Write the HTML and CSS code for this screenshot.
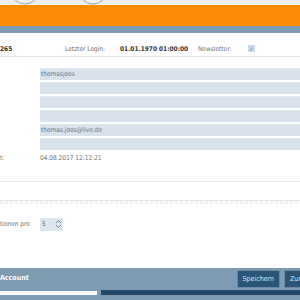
FILE: index.html
```html
<!DOCTYPE html>
<html lang="de">
<head>
	<meta charset="UTF-8">
	<title>Konto</title>
	<link rel="stylesheet" href="styles.css">
</head>
<body>
	<div class="top">
		<div class="icon"><svg width="30" height="30" viewBox="0 0 30 30"><circle cx="15" cy="15" r="14" fill="#f4f5f6" stroke="#9aa5b0" stroke-width="1"/><path d="M8 21h14M9 22l2-2h8l2 2" fill="none" stroke="#5c7a96" stroke-width="1"/></svg></div>
		<div class="icon icon2"><svg width="30" height="30" viewBox="0 0 30 30"><circle cx="15" cy="15" r="14" fill="#f4f5f6" stroke="#9aa5b0" stroke-width="1"/><path d="M6 21h18l-2 2H8z" fill="none" stroke="#5c7a96" stroke-width="1"/></svg></div>
	</div>
	<div class="orange"></div>
	<div class="band"></div>
	<div class="content">
		<div class="info">
			<span class="c1">265</span>
			<span class="c2">Letzter Login:</span>
			<span class="c3">01.01.1970 01:00:00</span>
			<span class="c4">Newsletter:</span>
			<span class="c5"><span class="check">&#10003;</span></span>
		</div>
		<div class="fields">
			<div class="field">thomasjoos</div>
			<div class="field"></div>
			<div class="field"></div>
			<div class="field"></div>
			<div class="field">thomas.joos@live.de</div>
			<div class="field"></div>
		</div>
		<div class="row">
			<span class="label">t:</span>
			<span class="value">04.08.2017 12:12:21</span>
		</div>
		<div class="sep"></div>
		<div class="dots"></div>
		<div class="row row2">
			<span class="label">tionen pro</span>
			<span class="select">5<span class="arrows"><svg width="7" height="10" viewBox="0 0 7 10"><path d="M1 4l2.5-2.5L6 4M1 6l2.5 2.5L6 6" fill="none" stroke="#6b7d90" stroke-width="0.9"/></svg></span></span>
		</div>
	</div>
	<div class="bottom">
		<div class="bar">
			<span class="title">Account</span>
			<div class="buttons">
				<span class="btn">Speichern</span>
				<span class="btn">Zurück</span>
			</div>
		</div>
		<div class="strip">
			<div class="light"></div>
			<div class="dark"></div>
		</div>
	</div>
</body>
</html>
```
FILE: styles.css
```css
body{
	margin: 0;
	width: 300px;
	height: 300px;
	overflow: hidden;
	font-family: "DejaVu Sans Condensed", "Liberation Sans Narrow", "Liberation Sans", sans-serif;
	font-size: 6.5px;
	color: #6a6f75;
	background: #fff;
}
.top{
	height: 5px;
	background: #eceff1;
	display: flex;
	overflow: hidden;
}
.icon{
	margin-top: -25px;
	margin-left: 10px;
}
.icon2{
	margin-left: 38px;
}
.orange{
	height: 21px;
	background: #fe8b06;
}
.band{
	height: 7px;
	background: #7d9ab0;
}
.content{
	padding-top: 10px;
}
.info{
	display: flex;
	align-items: center;
	height: 13px;
	border-bottom: 1px solid #e4e6e8;
	line-height: 13px;
}
.c1{
	width: 65px;
	color: #333;
	font-weight: bold;
}
.c2{
	width: 55px;
}
.c3{
	width: 78px;
	color: #333;
	font-weight: bold;
}
.c4{
	width: 50px;
}
.check{
	display: inline-block;
	width: 7px;
	height: 7px;
	background: #cfd9e6;
	color: #3e5f86;
	font-size: 6px;
	line-height: 7px;
	text-align: center;
}
.fields{
	margin-left: 40px;
	padding-top: 11px;
	display: flex;
	flex-direction: column;
	gap: 2px;
}
.field{
	height: 11px;
	line-height: 11px;
	background: #d8e1ec;
	border-top: 1px solid #e2e8f0;
	padding-left: 1px;
	color: #68788a;
}
.row{
	display: flex;
	align-items: center;
	height: 12px;
	margin-top: 2px;
}
.label{
	width: 40px;
}
.sep{
	margin-top: 17px;
	height: 1px;
	background: #e6e8ea;
}
.dots{
	margin-top: 18px;
	height: 3px;
	border-top: 1px solid #e4e6e8;
	background: repeating-linear-gradient(90deg, #f0f1f2 0 3px, #fff 3px 5px);
}
.row2{
	margin-top: 13px;
	height: 14px;
}
.select{
	display: flex;
	align-items: center;
	justify-content: space-between;
	width: 21px;
	height: 13px;
	padding-left: 2px;
	background: #dde5ef;
	color: #556677;
}
.arrows{
	display: flex;
	padding-right: 1px;
}
.bottom{
	margin-top: 37px;
	background: #7e9bb1;
	height: 32px;
}
.bar{
	display: flex;
	justify-content: space-between;
	height: 22px;
}
.title{
	color: #fff;
	font-weight: bold;
	padding-top: 6px;
	font-size: 7px;
}
.buttons{
	display: flex;
	gap: 4px;
	padding-top: 2px;
	margin-right: -18px;
}
.btn{
	height: 16px;
	line-height: 16px;
	padding: 0 5px;
	background: #2b5577;
	color: #dce6ef;
	font-size: 7px;
	border: 1px solid #6a8aa2;
}
.strip{
	display: flex;
	gap: 4px;
	height: 5px;
}
.light{
	width: 97px;
	background: #fff;
	margin-top: 1px;
}
.dark{
	flex: 1;
	background: #1f4a6c;
}
```
